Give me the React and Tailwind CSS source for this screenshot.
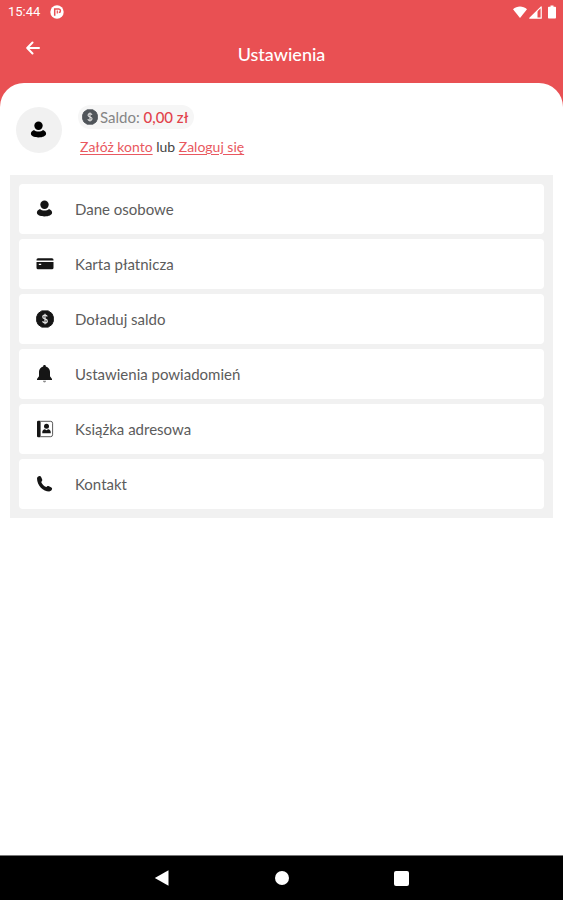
function PersonIcon({ className }) {
    return (
        <svg viewBox="0 0 18 18" className={className} fill="currentColor" aria-hidden="true">
            <circle cx="8.500" cy="4.800" r="4.200" />
            <path d="M4 9c-1.900.7-3.100 2-3.100 3.600 0 2.500 3.300 3.900 7.600 3.900s7.600-1.400 7.600-3.900c0-1.600-1.200-2.900-3.100-3.600-1.100 1-2.700 1.600-4.500 1.600S5.100 10 4 9z" />
        </svg>
    );
}

function CardIcon({ className }) {
    return (
        <svg viewBox="0 0 18 18" className={className} fill="currentColor" aria-hidden="true">
            <path d="M2 3.200h14a1.500 1.500 0 0 1 1.500 1.500v.8H.5v-.8A1.500 1.500 0 0 1 2 3.200z" />
            <path d="M.5 7h17v5.800a1.500 1.500 0 0 1-1.500 1.500H2a1.500 1.500 0 0 1-1.500-1.500zM2.800 8.800v1.200h2.400V8.800z" fillRule="evenodd" />
        </svg>
    );
}

function CoinIcon({ className }) {
    return (
        <svg viewBox="0 0 18 18" className={className} aria-hidden="true">
            <path d="M5.800.9h6.400l3.700 2.600 1.400 3.300v4.400l-1.400 3.300-3.700 2.600H5.800l-3.700-2.600L.7 11.200V6.800l1.400-3.300z" fill="currentColor" stroke="currentColor" strokeLinejoin="round" />
            <path d="M11.200 6.500C10.900 5.600 10.100 5.200 9 5.200c-1.300 0-2.200.7-2.200 1.800 0 2.600 4.500 1.300 4.500 4 0 1.100-1 1.900-2.300 1.900-1.200 0-2.100-.6-2.400-1.600M9 3.800v10.400" fill="none" stroke="#ddd" strokeWidth="1.300" />
        </svg>
    );
}

function BellIcon({ className }) {
    return (
        <svg viewBox="0 0 18 18" className={className} fill="currentColor" aria-hidden="true">
            <path d="M8.500 0c.8 0 1.300.5 1.300 1.200v.3c2.500.6 4.200 2.700 4.200 5.300v4.500l2 2.800v1H1v-1l2-2.800V6.800c0-2.600 1.700-4.700 4.200-5.300v-.3C7.200.5 7.700 0 8.500 0z" />
            <path d="M7 15.800h3c0 .9-.6 1.700-1.500 1.700S7 16.700 7 15.800z" opacity=".5" />
        </svg>
    );
}

function BookIcon({ className }) {
    return (
        <svg viewBox="0 0 18 18" className={className} fill="currentColor" aria-hidden="true">
            <path d="M2.200.7h2.400v16.600H2.200A1.200 1.200 0 0 1 1 16.100V1.900A1.200 1.200 0 0 1 2.200.7z" />
            <path d="M5 1.300h9.600a2 2 0 0 1 2 2v11.400a2 2 0 0 1-2 2H5" fill="none" stroke="currentColor" strokeWidth="1" opacity=".7" />
            <circle cx="10.500" cy="6.300" r="2.500" />
            <path d="M6.300 13.200v-1.300c0-1.300 1-2.300 2.600-2.600l1.600.9 1.600-.9c1.600.3 2.600 1.300 2.600 2.600v1.300z" />
        </svg>
    );
}

function PhoneIcon({ className }) {
    return (
        <svg viewBox="0 0 18 18" className={className} fill="currentColor" aria-hidden="true">
            <path d="M1 3.400C1 2 2.700.8 3.900 1c.8.100 1.300.9 2.200 3.200.4 1.100.2 1.500-.9 2.700.8 2.200 2.700 4.200 5 5.200 1.200-1.200 1.600-1.400 2.800-.9 2.300 1 3 1.600 3.100 2.400.1 1.200-1.300 2.900-2.900 2.900C7.300 16.500 1.100 10.500 1 3.400z" />
        </svg>
    );
}

const menuItems = [
    { label: "Dane osobowe", Icon: PersonIcon },
    { label: "Karta płatnicza", Icon: CardIcon },
    { label: "Doładuj saldo", Icon: CoinIcon },
    { label: "Ustawienia powiadomień", Icon: BellIcon },
    { label: "Książka adresowa", Icon: BookIcon },
    { label: "Kontakt", Icon: PhoneIcon },
];

function StatusBar() {
    return (
        <div className="flex h-6 items-center justify-between pr-[3px] pl-2 font-['Roboto',sans-serif] text-white">
            <div className="flex items-center gap-2.5">
                <span className="text-[13px] leading-4">15:44</span>
                <svg viewBox="0 0 14 14" className="size-3.5" aria-hidden="true">
                    <circle cx="7" cy="7" r="6.700" fill="#fff" />
                    <path d="M4.700 10.800V4h4.100c2.200 0 2.200 3.600 0 3.600" fill="none" stroke="#e95053" strokeWidth="1.500" />
                    <path d="M7.300 5.500v3" stroke="#e95053" strokeWidth="1.200" />
                </svg>
            </div>
            <div className="flex items-center gap-0.5">
                <svg viewBox="0 0 14 12" className="h-3 w-3.5" fill="currentColor" aria-hidden="true">
                    <path d="M0 3.200C4 -.5 10 -.5 14 3.200L7 12z" />
                </svg>
                <svg viewBox="0 0 13 13" className="size-[13px]" aria-hidden="true">
                    <path d="M12.200.8v11.400H.8z" fill="none" stroke="#fff" strokeWidth="1.200" strokeLinejoin="round" />
                    <path d="M8.500 4.500V12H1z" fill="#fff" />
                </svg>
                <svg viewBox="0 0 16 14" className="h-3.5 w-4" fill="currentColor" aria-hidden="true">
                    <path d="M6.500.5h3v1.300h1.700c.5 0 .8.300.8.800v10c0 .5-.3.900-.8.900H4.800a.8.800 0 0 1-.8-.9v-10c0-.5.300-.8.800-.8h1.700z" />
                </svg>
            </div>
        </div>
    );
}

export default function App() {
    return (
        <div className="flex min-h-screen flex-col bg-white font-['Lato','Noto_Sans',sans-serif]">
            <div className="bg-[#e95053]">
                <StatusBar />
                <header className="grid h-[59px] grid-cols-[66px_1fr_66px]">
                    <button type="button" aria-label="Wstecz" className="flex justify-center pt-[17px] text-white">
                        <svg viewBox="0 0 14 14" className="size-3.5" fill="none" stroke="currentColor" strokeWidth="2" strokeLinecap="round" strokeLinejoin="round" aria-hidden="true">
                            <path d="M13 7H1.500M6.500 1.500L1.200 7l5.300 5.500" />
                        </svg>
                    </button>
                    <h1 className="self-center text-center text-lg leading-6 font-medium text-white">Ustawienia</h1>
                </header>
                <div className="h-6 rounded-t-3xl bg-white" />
            </div>

            <main className="flex-1">
                <section className="flex h-[68px] items-start gap-4 pl-4">
                    <div className="flex size-[46px] items-center justify-center rounded-full bg-[#f1f1f1] text-black">
                        <PersonIcon className="size-[18px]" />
                    </div>
                    <div className="-mt-0.5">
                        <div className="flex h-6 w-fit items-center gap-0.5 rounded-full bg-[#f6f6f6] pr-1.5 pl-1">
                            <CoinIcon className="size-4 text-[#50555a]" />
                            <p className="text-[15px] leading-6 text-[#858585]">
                                Saldo: <span className="font-medium text-[#e2424b]">0,00 zł</span>
                            </p>
                        </div>
                        <p className="mt-2 pl-0.5 text-sm leading-5 text-[#444]">
                            <a href="#register" className="text-[#e95860] underline underline-offset-2">Załóż konto</a>
                            {" lub "}
                            <a href="#login" className="text-[#e95860] underline underline-offset-2">Zaloguj się</a>
                        </p>
                    </div>
                </section>

                <nav className="mx-2.5 bg-[#f1f1f1] p-[9px]">
                    <ul className="flex flex-col gap-[5px]">
                        {menuItems.map(({ label, Icon }) => (
                            <li key={label}>
                                <button type="button" className="flex h-[50px] w-full items-center gap-[21px] rounded-sm bg-white pl-[17px] text-left text-[15px] leading-5 text-[#5c5c5c]">
                                    <Icon className="size-[18px] text-[#151515]" />
                                    {label}
                                </button>
                            </li>
                        ))}
                    </ul>
                </nav>
            </main>

            <footer className="flex h-[45px] items-center justify-center gap-[105px] border-t border-[#777] bg-black text-white">
                <button type="button" aria-label="Wróć">
                    <svg viewBox="0 0 16 16" className="size-4" fill="currentColor" aria-hidden="true">
                        <path d="M.8 8L14.500.3v15.400z" />
                    </svg>
                </button>
                <button type="button" aria-label="Ekran główny" className="size-3.5 rounded-full bg-white" />
                <button type="button" aria-label="Ostatnie" className="size-[15px] rounded-xs bg-white" />
            </footer>
        </div>
    );
}
